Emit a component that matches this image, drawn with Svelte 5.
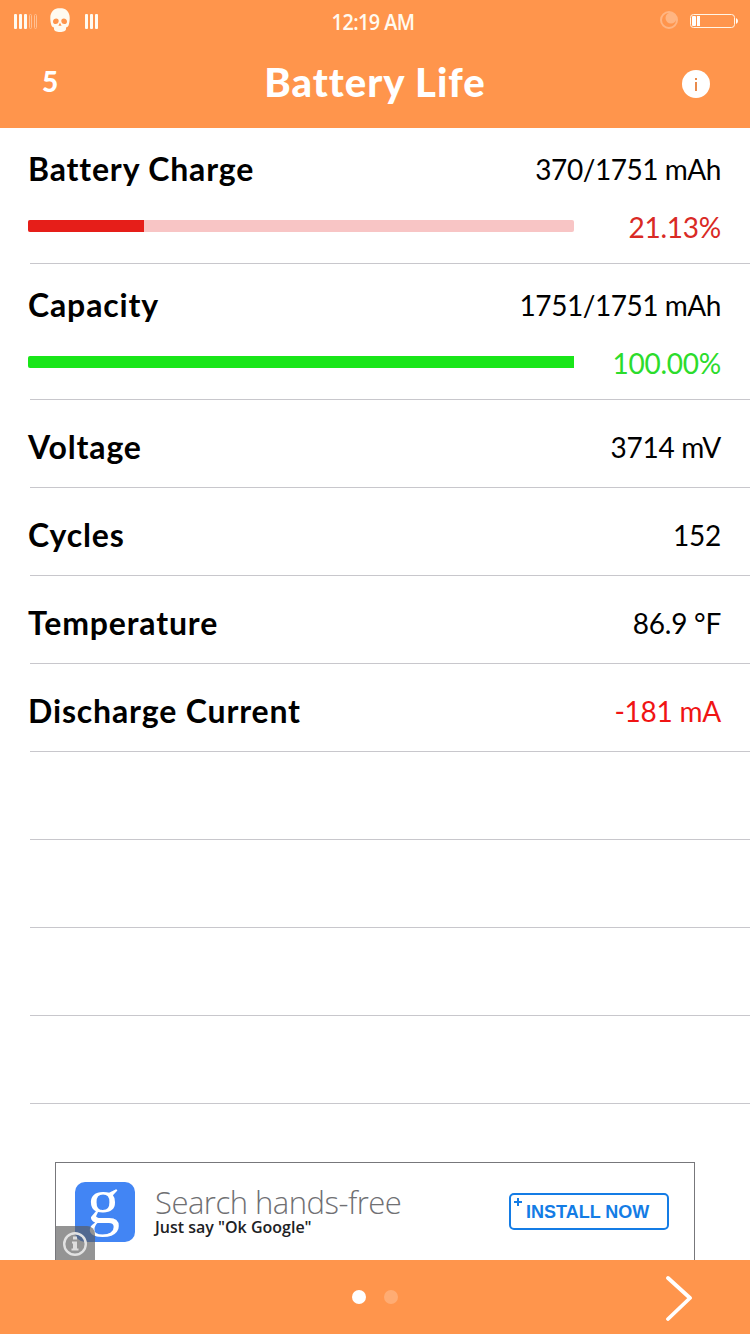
<script>
    const meters = [
        {name: 'Battery Charge', value: '370/1751 mAh', percent: 21.13, kind: 'low'},
        {name: 'Capacity', value: '1751/1751 mAh', percent: 100, kind: 'full'}
    ];

    const readings = [
        {name: 'Voltage', value: '3714 mV'},
        {name: 'Cycles', value: '152'},
        {name: 'Temperature', value: '86.9 °F'},
        {name: 'Discharge Current', value: '-181 mA', negative: true}
    ];

    const empty_rows = [1, 2, 3, 4];
</script>

<div class="screen">
    <header>
        <div class="status">
            <svg class="signal" width="130" height="44" viewBox="0 0 130 44">
                <g fill="#fffaf0">
                    <rect x="14" y="14" width="3" height="15" rx="1"/>
                    <rect x="19" y="14" width="3" height="15" rx="1"/>
                    <rect x="24" y="14" width="3" height="15" rx="1"/>
                    <rect x="85" y="14" width="3" height="15" rx="1"/>
                    <rect x="90" y="14" width="3" height="15" rx="1"/>
                    <rect x="95" y="14" width="3" height="15" rx="1"/>
                    <path d="M60 8c-6 0-9.700 4-9.700 10 0 3 .5 5 1 7 .4 1.600 1.600 2 2.700 2.600V29c0 2 2.500 3 6 3s6-1 6-3v-1.400c1.100-.6 2.300-1 2.700-2.600.5-2 1-4 1-7 0-6-3.700-10-9.700-10z"/>
                </g>
                <g fill="none" stroke="#ffc093">
                    <rect x="29.500" y="14.500" width="2" height="14" rx="1"/>
                    <rect x="34.500" y="14.500" width="2" height="14" rx="1"/>
                </g>
                <g fill="#ff954c">
                    <path d="M53 21.500c0-3.500 5.500-4 5.700-.8.200 2-1.400 3.300-3 3.300S53 23.500 53 21.500zM67 21.500c0-3.500-5.500-4-5.700-.8-.2 2 1.400 3.300 3 3.300s2.700-.5 2.700-2.500zM60 22.800l-1.600 3h3.200z"/>
                </g>
            </svg>
            <span class="time">12:19 AM</span>
            <svg class="power" width="100" height="44" viewBox="650 0 100 44">
                <circle cx="669" cy="20" r="8" fill="none" stroke="#ffb582" stroke-width="2"/>
                <circle cx="671" cy="18" r="5.500" fill="#ffb582"/>
                <rect x="690.500" y="14.500" width="44" height="13" rx="3" fill="none" stroke="#fff5e6"/>
                <rect x="692" y="16" width="4" height="10" rx="1" fill="#fff"/>
                <rect x="697" y="16" width="3" height="10" fill="#fff"/>
                <path d="M736 18q2 1 2 3t-2 3z" fill="#fff"/>
            </svg>
        </div>
        <div class="nav">
            <span class="count">5</span>
            <h1>Battery Life</h1>
            <svg class="info" width="28" height="28" viewBox="0 0 28 28">
                <circle cx="14" cy="14" r="14" fill="#fff"/>
                <path d="M13 8h2v2h-2zM13 12h2v9h-2z" fill="#e98b4c"/>
            </svg>
        </div>
    </header>

    <main>
        {#each meters as meter}
            <div class="meter {meter.kind}">
                <div class="line">
                    <span class="name">{meter.name}</span>
                    <span class="value">{meter.value}</span>
                </div>
                <div class="line">
                    <div class="track"><div class="fill" style="width: {Math.ceil(meter.percent * 5.46)}px"></div></div>
                    <span class="value percent">{meter.percent.toFixed(2)}%</span>
                </div>
            </div>
        {/each}

        {#each readings as reading}
            <div class="row">
                <span class="name">{reading.name}</span>
                <span class="value" class:negative={reading.negative}>{reading.value}</span>
            </div>
        {/each}

        {#each empty_rows as row (row)}
            <div class="row"></div>
        {/each}
    </main>

    <div class="ad">
        <div class="logo"><span>g</span></div>
        <div class="copy">
            <span class="headline">Search hands-free</span>
            <span class="tagline">Just say "Ok Google"</span>
        </div>
        <div class="install">
            <svg width="8" height="8" viewBox="0 0 8 8"><path d="M4 0v8M0 4h8" stroke="#147ce5" stroke-width="2"/></svg>
            <span>INSTALL NOW</span>
        </div>
        <div class="badge">
            <svg width="24" height="24" viewBox="0 0 24 24">
                <circle cx="12" cy="12" r="10.800" fill="none" stroke="#e2e2e2" stroke-width="2.400"/>
                <path d="M10 4.500h4v3h-4zM9 9.500h5v7h1.500v2h-7v-2H10v-5H9z" fill="#dedede"/>
            </svg>
        </div>
    </div>

    <footer>
        <div class="dots"><i></i><i class="dim"></i></div>
        <svg class="next" width="30" height="48" viewBox="0 0 30 48">
            <path d="M4 5l22 20L4 46" fill="none" stroke="#fff" stroke-width="3.800" stroke-linecap="round" stroke-linejoin="round"/>
        </svg>
    </footer>
</div>

<style>
    :global(body) {
        background: #fff;
    }

    .screen {
        display: flex;
        flex-direction: column;
        width: 750px;
        height: 1334px;
        overflow: hidden;
        font-family: Lato, "Liberation Sans", sans-serif;
        color: #000;
        background: #fff;
    }

    header {
        height: 128px;
        color: #fff;
        background: #ff954c;
    }

    .status {
        display: grid;
        grid-template-columns: 1fr auto 1fr;
        height: 44px;
    }

    .time {
        font: 600 22px/42px "Open Sans", sans-serif;
        letter-spacing: -0.6px;
        color: #fffaf0;
        transform: translateX(-2px) scaleX(0.9);
    }

    .power {
        justify-self: end;
    }

    .nav {
        display: grid;
        grid-template-columns: 1fr auto 1fr;
        align-items: center;
        height: 80px;
        padding: 0 40px 0 42px;
    }

    .count {
        padding-bottom: 5px;
        font-size: 28px;
        font-weight: 900;
        line-height: 71px;
    }

    h1 {
        margin: 0 1px 0 -1px;
        padding-bottom: 4px;
        font-size: 40px;
        font-weight: 900;
        line-height: 72px;
        letter-spacing: 1px;
        white-space: nowrap;
    }

    .info {
        justify-self: end;
    }

    .meter,
    .row {
        box-sizing: border-box;
        margin-left: 30px;
        border-bottom: 1px solid #c8c7cc;
    }

    .meter {
        height: 136px;
        padding-top: 12px;
    }

    .row,
    .line {
        display: flex;
        align-items: center;
        justify-content: space-between;
    }

    .row {
        height: 88px;
        padding: 6px 29px 0 0;
    }

    .line {
        height: 57px;
        padding-right: 29px;
    }

    .name {
        margin-left: -2px;
        font-size: 32px;
        font-weight: 700;
        letter-spacing: 0.85px;
    }

    .value {
        font-size: 28px;
        letter-spacing: -0.25px;
        white-space: nowrap;
    }

    .line .value:not(.percent) {
        letter-spacing: -0.45px;
    }

    .percent {
        padding-top: 2px;
    }

    .track {
        width: 546px;
        height: 12px;
        margin-left: -2px;
        border-radius: 2px;
        overflow: hidden;
    }

    .fill {
        height: 100%;
    }

    .low .track {
        background: #f8c5c5;
    }

    .low .fill {
        background: #e61e19;
    }

    .low .percent {
        color: #d92a25;
    }

    .full .track {
        border-radius: 2px 0 0 2px;
    }

    .full .fill {
        background: #19e619;
    }

    .full .percent {
        color: #2cdc2c;
    }

    .negative {
        color: #f01414;
    }

    .ad {
        position: relative;
        display: flex;
        box-sizing: border-box;
        width: 640px;
        height: 98px;
        margin: 58px auto 0;
        padding: 19px 25px 0 19px;
        border: 1px solid #77777b;
        border-bottom: 0;
    }

    .logo {
        width: 60px;
        height: 60px;
        border-radius: 10px;
        color: #fff;
        text-align: center;
        background: #4285f4;
    }

    .logo span {
        display: block;
        margin-top: -3px;
        font: 66px/44px "Liberation Serif", serif;
        letter-spacing: 3px;
    }

    .logo::before {
        content: "";
        display: table;
    }

    .copy {
        display: flex;
        flex-direction: column;
        margin-left: 20px;
        font-family: "Open Sans", sans-serif;
        white-space: nowrap;
    }

    .headline {
        font-size: 31px;
        font-weight: 300;
        line-height: 40px;
        letter-spacing: -0.5px;
        color: #707073;
    }

    .tagline {
        font-size: 16px;
        font-weight: 600;
        line-height: 10px;
        color: #202124;
    }

    .install {
        display: flex;
        box-sizing: border-box;
        width: 160px;
        height: 37px;
        margin: 11px 0 0 auto;
        padding: 3px;
        border: 2px solid #147ce5;
        border-radius: 5px;
        font: 700 18px/29px "Liberation Sans", sans-serif;
        color: #147ce5;
    }

    .install span {
        margin-left: 4px;
        white-space: nowrap;
    }

    .badge {
        position: absolute;
        left: 0;
        bottom: 0;
        display: grid;
        box-sizing: border-box;
        place-items: center;
        width: 39px;
        height: 34px;
        padding: 2px 1px 0 0;
        border-top-right-radius: 8px;
        background: rgb(90 90 90 / 65%);
    }

    footer {
        display: grid;
        grid-template-columns: 1fr auto 1fr;
        align-items: center;
        height: 74px;
        padding: 0 56px;
        background: #ff954c;
    }

    .dots {
        display: flex;
        grid-column: 2;
        gap: 18px;
    }

    .dots i {
        width: 14px;
        height: 14px;
        border-radius: 50%;
        background: #fff;
    }

    .dots .dim {
        background: #ffac73;
    }

    .next {
        justify-self: end;
    }
</style>
